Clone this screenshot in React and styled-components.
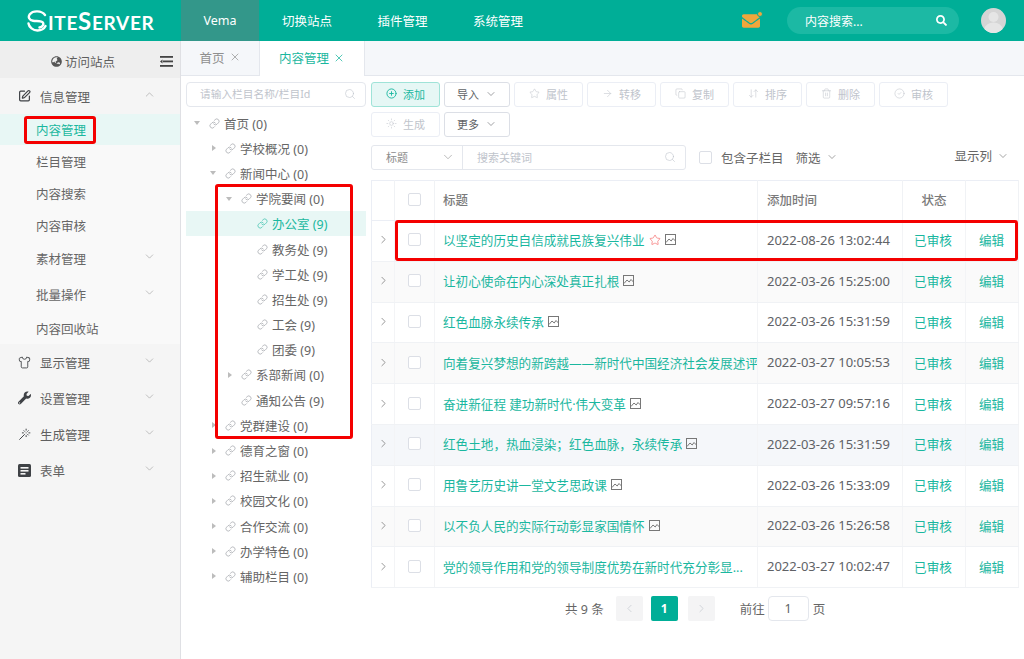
import React from 'react';
import styled, { createGlobalStyle } from 'styled-components';
import { ChevronDown, ChevronUp, ChevronRight, ChevronLeft, X, Search, Link, CirclePlus, Star, ArrowRight, Copy, ArrowDownUp, Trash2, CircleCheck, Sun, Shirt, SquarePen, Wand } from 'lucide-react';
import { FaWrench, FaEnvelope, FaSearch, FaGlobeAsia } from 'react-icons/fa';

const Global = createGlobalStyle`
  html, body { margin: 0; padding: 0; background: #fff; }
  body { font-family: "Noto Sans", "Noto Sans CJK SC", sans-serif; }
  * { box-sizing: border-box; }
`;
const GREEN = '#00ae97';
const Page = styled.div`position: relative; width: 1024px; height: 659px; overflow: hidden; display: flex; flex-direction: column; color: #666; font-size: 12.5px;`;
const Header = styled.header`height: 41px; flex: none; background: ${GREEN}; display: flex; align-items: center; color: #fff;`;
const LogoBox = styled.div`width: 181px; flex: none; padding-left: 27px; display: flex; align-items: center; height: 100%;`;
const LogoText = styled.span`font-family: "Lato", sans-serif; font-weight: 700; font-size: 19px; letter-spacing: 0.7px; margin-left: 1px; white-space: nowrap;`;
const LogoBig = styled.span`font-size: 24px;`;
const NavItem = styled.div`height: 100%; width: ${p => p.$w}px; flex: none; display: flex; align-items: center; justify-content: center; background: ${p => p.$active ? '#33978a' : 'transparent'}; font-size: 12.5px;`;
const HeaderRight = styled.div`margin-left: auto; display: flex; align-items: center; height: 100%; padding-right: 18px;`;
const Mail = styled.div`position: relative; width: 18px; height: 15px; color: #f0a63c; font-size: 18px; line-height: 0; margin-right: 27px; display:flex; align-items:center;`;
const MailDot = styled.i`position: absolute; right: -3px; top: -2px; width: 6px; height: 6px; border-radius: 50%; background: #f0a63c; border: 0.5px solid #00ae97;`;
const TopSearch = styled.div`width: 172px; height: 27px; border-radius: 14px; background: #1cb9a4; display: flex; align-items: center; justify-content: space-between; padding: 0 12px 0 18px; font-size: 12px; margin-right: 22px;`;
const Avatar = styled.div`width: 25px; height: 25px; border-radius: 50%; overflow: hidden; background: #eee; line-height: 0;`;

const Body = styled.div`flex: 1; display: flex; min-height: 0;`;
const Sidebar = styled.aside`width: 181px; flex: none; background: #f5f5f5; border-right: 1px solid #dfe0e4; display: flex; flex-direction: column;`;
const VisitBar = styled.div`height: 37px; flex: none; background: #eeeeee; position: relative; display: flex; align-items: center; justify-content: center; gap: 3px; padding-right: 14px; padding-top: 3px; font-size: 12.5px; color: #5e5e5e;`;
const FoldIcon = styled.svg`position: absolute; right: 7px; top: 15px;`;
const GroupRow = styled.div`height: ${p => p.$h || 36}px; display: flex; align-items: center; padding: 0 24px 0 18px; color: #606060; gap: 9px; flex: none;`;
const GroupIcon = styled.span`width: 13px; height: 14px; display: flex; align-items: center; justify-content: center; color: #3f4246;`;
const GroupLabel = styled.span`flex: 1;`;
const Chevron = styled.span`color: #999; line-height: 0; margin-top: -4px;`;
const SubMenu = styled.div`background: #f9f9f9; display: flex; flex-direction: column; flex: none;`;
const SubItem = styled.div`height: ${p => p.$h}px; flex: none; display: flex; align-items: center; padding: 0 24px 0 36px; color: ${p => p.$active ? '#1ab79f' : '#666'}; background: ${p => p.$active ? '#e8f7f5' : 'transparent'}; justify-content: space-between;`;

const Main = styled.main`flex: 1; display: flex; flex-direction: column; min-width: 0;`;
const Tabs = styled.div`height: 35px; flex: none; background: #f5f7fa; border-bottom: 1px solid #e4e7ed; display: flex; align-items: stretch;`;
const Tab = styled.div`width: ${p => p.$w}px; flex: none; display: flex; align-items: center; justify-content: center; gap: 4px; color: ${p => p.$active ? '#1ab79f' : '#8f8f8f'}; background: ${p => p.$active ? '#fff' : 'transparent'}; margin-bottom: ${p => p.$active ? '-1px' : 0}; border-right: 1px solid #e4e7ed; padding-bottom: 2px;`;
const Content = styled.div`flex: 1; display: flex; min-height: 0; padding: 6px 6px 0 5px; gap: 5px;`;
const TreePanel = styled.div`width: 180px; flex: none; display: flex; flex-direction: column;`;
const InputBox = styled.div`height: 24.5px; border: 1px solid #e4e7ed; border-radius: 4px; display: flex; align-items: center; justify-content: space-between; padding: 0 9px 1px 13px; color: #c0c4cc; font-size: 10.7px; background: #fff; flex: none;`;
const Tree = styled.div`margin-top: 4px; display: flex; flex-direction: column;`;
const TreeRow = styled.div`height: 25.2px; flex: none; display: flex; align-items: center; padding-left: ${p => p.$level * 16 + 8}px; color: ${p => p.$active ? '#1ab79f' : '#666'}; background: ${p => p.$active ? '#e8f7f5' : 'transparent'}; white-space: nowrap;`;
const CaretSlot = styled.span`width: 15px; flex: none; display: flex; align-items: center; padding-left: ${p => p.$open ? 0 : 2}px;`;
const Caret = styled.span`width: 0; height: 0; visibility: ${p => p.$hidden ? 'hidden' : 'visible'}; border-style: solid; border-color: transparent; ${p => p.$open ? 'border-width: 4px 3.5px 0 3.5px; border-top-color: #bcbcbc;' : 'border-width: 3.5px 0 3.5px 4px; border-left-color: #bcbcbc;'}`;
const LinkIcon = styled.span`width: 11px; line-height: 0; margin-right: 4px; color: ${p => p.$active ? '#1ab79f' : '#909399'};`;

const Right = styled.div`flex: 1; min-width: 0; display: flex; flex-direction: column;`;
const Toolbar = styled.div`display: flex; flex-wrap: wrap; gap: 5px 4px; width: 600px;`;
const Btn = styled.div`width: ${p => p.$w || 69}px; height: 25px; border-radius: 3px; padding-bottom: 2px; border: 1px solid ${p => p.$primary ? '#9fe3d8' : p.$off ? '#ebeef5' : '#dcdfe6'}; background: ${p => p.$primary ? '#e6f7f5' : '#fff'}; color: ${p => p.$primary ? '#1ab79f' : p.$off ? '#c0c4cc' : '#606266'}; font-size: 11px; display: flex; align-items: center; justify-content: center; gap: 6px;`;
const FilterRow = styled.div`margin-top: 8px; height: 25px; flex: none; display: flex; align-items: center; white-space: nowrap;`;
const Combo = styled.div`width: 315px; flex: none; height: 25px; border: 1px solid #e4e7ed; border-radius: 3px; display: flex; align-items: stretch; font-size: 11px;`;
const ComboSelect = styled.div`width: 91px; flex: none; border-right: 1px solid #e4e7ed; display: flex; align-items: center; justify-content: space-between; padding: 0 7px 2px 14px; color: #8c8c8c;`;
const ComboInput = styled.div`flex: 1; display: flex; align-items: center; justify-content: space-between; padding: 0 9px 2px 14px; color: #c0c4cc;`;
const Check = styled.span`display: block; width: 13px; height: 13px; border: 1px solid #dcdfe6; border-radius: 2px; background: #fff; flex: none;`;
const FilterLabel = styled.span`color: #666; margin-left: ${p => p.$ml}px; margin-top: ${p => p.$mt || 0}px; display: flex; align-items: center; gap: 5px; flex: none;`;
const Table = styled.table`margin-top: 10px; width: 647px; table-layout: fixed; border-collapse: collapse; border: 1px solid #ebeef5; font-size: 12.6px;`;
const Th = styled.th`height: 40px; padding: 0 0 2px ${p => p.$pl || 0}px; border-right: 1px solid #f0f2f5; border-bottom: 1px solid #ebeef5; color: #7a7a7a; font-weight: 500; font-size: 12.5px; text-align: ${p => p.$align || 'left'};`;
const Tr = styled.tr`background: ${p => p.$bg};`;
const Td = styled.td`height: 40.8px; padding: 0 ${p => p.$pr || 0}px 2px ${p => p.$pl || 0}px; border-right: 1px solid #f3f4f6; border-bottom: 1px solid #f0f2f5; text-align: ${p => p.$align || 'left'}; color: ${p => p.$green ? '#1ab79f' : '#606266'}; white-space: nowrap; overflow: hidden;`;
const TimeText = styled.span`font-size: 13px;`;
const CellCenter = styled.div`display: flex; justify-content: center; align-items: center; color: #777;`;
const TitleCell = styled.div`display: flex; align-items: center; gap: 4px; color: #1ab79f; width: 314px;`;
const TitleText = styled.span`overflow: hidden; white-space: nowrap;`;
const PicIcon = styled.svg`flex: none;`;
const Pager = styled.div`margin-top: 8px; display: flex; align-items: center; padding-left: 194px; font-size: 12.5px; color: #666;`;
const PageBtn = styled.div`width: 27px; height: 25px; flex: none; border-radius: 2px; background: ${p => p.$active ? '#00ae97' : '#f4f4f5'}; color: ${p => p.$active ? '#fff' : '#c0c4cc'}; font-weight: 700; margin-left: ${p => p.$ml}px; display: flex; align-items: center; justify-content: center; font-size: 12px;`;
const PageGoto = styled.span`margin-left: 25px;`;
const PageInput = styled.div`width: 41px; height: 25px; border: 1px solid #e4e7ed; border-radius: 4px; display: flex; align-items: center; justify-content: center; margin: 0 4px 0 3px; color: #606266;`;
const Mark = styled.div`position: absolute; left: ${p => p.$x}px; top: ${p => p.$y}px; width: ${p => p.$w}px; height: ${p => p.$h}px; border: 3px solid #f40000; border-radius: 3px; pointer-events: none;`;

const tree = [
  [0, 'o', '首页 (0)'], [1, 'c', '学校概况 (0)'], [1, 'o', '新闻中心 (0)'], [2, 'o', '学院要闻 (0)'],
  [3, 'n', '办公室 (9)', true], [3, 'n', '教务处 (9)'], [3, 'n', '学工处 (9)'], [3, 'n', '招生处 (9)'], [3, 'n', '工会 (9)'], [3, 'n', '团委 (9)'],
  [2, 'c', '系部新闻 (0)'], [2, 'n', '通知公告 (9)'], [1, 'c', '党群建设 (0)'], [1, 'c', '德育之窗 (0)'], [1, 'c', '招生就业 (0)'], [1, 'c', '校园文化 (0)'], [1, 'c', '合作交流 (0)'], [1, 'c', '办学特色 (0)'], [1, 'c', '辅助栏目 (0)'],
];
const rows = [
  ['以坚定的历史自信成就民族复兴伟业', '2022-08-26 13:02:44', true, '#fff'],
  ['让初心使命在内心深处真正扎根', '2022-03-26 15:25:00', false, '#fafafa'],
  ['红色血脉永续传承', '2022-03-26 15:31:59', false, '#fff'],
  ['向着复兴梦想的新跨越——新时代中国经济社会发展述评', '2022-03-27 10:05:53', false, '#fafafa', true],
  ['奋进新征程 建功新时代·伟大变革', '2022-03-27 09:57:16', false, '#fff'],
  ['红色土地，热血浸染；红色血脉，永续传承', '2022-03-26 15:31:59', false, '#f5f7fa'],
  ['用鲁艺历史讲一堂文艺思政课', '2022-03-26 15:33:09', false, '#fff'],
  ['以不负人民的实际行动彰显家国情怀', '2022-03-26 15:26:58', false, '#fafafa'],
  ['党的领导作用和党的领导制度优势在新时代充分彰显...', '2022-03-27 10:02:47', false, '#fff', true],
];
const Pic = () => (
  <PicIcon width="11" height="11" viewBox="0 0 11 11" fill="none" stroke="#777" strokeWidth="1">
    <rect x=".5" y=".5" width="10" height="10" />
    <path d="M1 8.500 4 5l2.200 2L8 4.500 10.500 7" />
  </PicIcon>
);
const FormIcon = () => (
  <svg width="13" height="13" viewBox="0 0 13 13"><rect width="13" height="13" rx="1.500" fill="#3f4246" /><rect x="2.500" y="3" width="8" height="1.600" fill="#f5f5f5" /><rect x="2.500" y="6" width="8" height="1.600" fill="#f5f5f5" /><rect x="2.500" y="9" width="5" height="1.600" fill="#f5f5f5" /></svg>
);
const Down = () => <Chevron><ChevronDown size={13} strokeWidth={1.1} /></Chevron>;

export default function App() {
  return (
    <Page>
      <Global />
      <Header>
        <LogoBox>
          <svg width="20" height="22" viewBox="0 0 20 22" fill="none" stroke="#fff" strokeWidth="2.400" strokeLinecap="round">
            <path d="M18 5C14.500 .5 6 .2 2.800 4.300 .8 7 2 10 6 10.700c3.500.6 7.500-.2 9.500 1.500 1.800 1.700.5 4.800-3 5.300" />
            <path d="M1.500 13.500C2 17 6 20.500 10.500 20.500c3.500 0 6.500-1.500 8-4.500" />
          </svg>
          <LogoText>ITE<LogoBig>S</LogoBig>ERVER</LogoText>
        </LogoBox>
        <NavItem $w={78} $active>Vema</NavItem>
        <NavItem $w={96}>切换站点</NavItem>
        <NavItem $w={95}>插件管理</NavItem>
        <NavItem $w={96}>系统管理</NavItem>
        <HeaderRight>
          <Mail><FaEnvelope /><MailDot /></Mail>
          <TopSearch>内容搜索...<FaSearch size={11} /></TopSearch>
          <Avatar>
            <svg width="25" height="25" viewBox="0 0 25 25"><circle cx="12.500" cy="9" r="5" fill="#fff" /><ellipse cx="12.500" cy="21" rx="9" ry="6.500" fill="#fff" /><rect width="25" height="25" fill="#000" opacity="0.1" /></svg>
          </Avatar>
        </HeaderRight>
      </Header>
      <Body>
        <Sidebar>
          <VisitBar>
            <FaGlobeAsia size={11} color="#555" />访问站点
            <FoldIcon width="13" height="11" viewBox="0 0 13 11" fill="#444"><rect width="13" height="1.800" /><rect x="3" y="4.500" width="10" height="1.800" /><rect y="9" width="13" height="1.800" /><path d="M2.500 3.500v4L0 5.500z" /></FoldIcon>
          </VisitBar>
          <GroupRow><GroupIcon><SquarePen size={14} strokeWidth={2.2} /></GroupIcon><GroupLabel>信息管理</GroupLabel><Chevron><ChevronUp size={13} strokeWidth={1.1} /></Chevron></GroupRow>
          <SubMenu>
            <SubItem $h={31} $active>内容管理</SubItem>
            <SubItem $h={32}>栏目管理</SubItem>
            <SubItem $h={32}>内容搜索</SubItem>
            <SubItem $h={32}>内容审核</SubItem>
            <SubItem $h={34}>素材管理<Down /></SubItem>
            <SubItem $h={38}>批量操作<Down /></SubItem>
            <SubItem $h={31}>内容回收站</SubItem>
          </SubMenu>
          <GroupRow><GroupIcon><Shirt size={15} strokeWidth={1.6} /></GroupIcon><GroupLabel>显示管理</GroupLabel><Down /></GroupRow>
          <GroupRow><GroupIcon><FaWrench size={14} /></GroupIcon><GroupLabel>设置管理</GroupLabel><Down /></GroupRow>
          <GroupRow><GroupIcon><Wand size={15} strokeWidth={1.8} /></GroupIcon><GroupLabel>生成管理</GroupLabel><Down /></GroupRow>
          <GroupRow><GroupIcon><FormIcon /></GroupIcon><GroupLabel>表单</GroupLabel><Down /></GroupRow>
        </Sidebar>
        <Main>
          <Tabs>
            <Tab $w={79}>首页 <X size={12} strokeWidth={1.4} /></Tab>
            <Tab $w={105} $active>内容管理 <X size={12} strokeWidth={1.5} /></Tab>
          </Tabs>
          <Content>
            <TreePanel>
              <InputBox>请输入栏目名称/栏目Id<Search size={12} strokeWidth={1.2} /></InputBox>
              <Tree>
                {tree.map(([level, kind, label, active]) => (
                  <TreeRow key={label} $level={level} $active={active}>
                    <CaretSlot $open={kind === 'o'}><Caret $open={kind === 'o'} $hidden={kind === 'n'} /></CaretSlot>
                    <LinkIcon $active={active}><Link size={11} strokeWidth={1.3} /></LinkIcon>
                    {label}
                  </TreeRow>
                ))}
              </Tree>
            </TreePanel>
            <Right>
              <Toolbar>
                <Btn $primary><CirclePlus size={11} />添加</Btn>
                <Btn $w={66}>导入<ChevronDown size={12} strokeWidth={1.2} /></Btn>
                <Btn $off><Star size={11} strokeWidth={1.2} />属性</Btn>
                <Btn $off><ArrowRight size={11} strokeWidth={1.2} />转移</Btn>
                <Btn $off><Copy size={11} strokeWidth={1.2} />复制</Btn>
                <Btn $off><ArrowDownUp size={11} strokeWidth={1.2} />排序</Btn>
                <Btn $off><Trash2 size={11} strokeWidth={1.2} />删除</Btn>
                <Btn $off><CircleCheck size={11} strokeWidth={1.2} />审核</Btn>
                <Btn $off><Sun size={11} strokeWidth={1.2} />生成</Btn>
                <Btn $w={66}>更多<ChevronDown size={12} strokeWidth={1.2} /></Btn>
              </Toolbar>
              <FilterRow>
                <Combo>
                  <ComboSelect>标题<ChevronDown size={14} strokeWidth={1} /></ComboSelect>
                  <ComboInput>搜索关键词<Search size={12} strokeWidth={1.2} /></ComboInput>
                </Combo>
                <FilterLabel $ml={13}><Check /></FilterLabel>
                <FilterLabel $ml={9} $mt={-1}>包含子栏目</FilterLabel>
                <FilterLabel $ml={12} $mt={-1}>筛选<ChevronDown size={12} strokeWidth={1.2} /></FilterLabel>
                <FilterLabel $ml={117} $mt={-4}>显示列<ChevronDown size={12} strokeWidth={1.2} /></FilterLabel>
              </FilterRow>
              <Table>
                <colgroup>
                  <col width="23" /><col width="40" /><col width="323" /><col width="145" /><col width="63" /><col width="53" />
                </colgroup>
                <thead>
                  <tr>
                    <Th /><Th><CellCenter><Check /></CellCenter></Th>
                    <Th $pl={8}>标题</Th><Th $pl={9}>添加时间</Th><Th $align="center">状态</Th><Th />
                  </tr>
                </thead>
                <tbody>
                  {rows.map(([title, time, star, bg, noPic]) => (
                    <Tr key={title} $bg={bg}>
                      <Td><CellCenter><ChevronRight size={13} strokeWidth={1.4} /></CellCenter></Td>
                      <Td><CellCenter><Check /></CellCenter></Td>
                      <Td $pl={8}>
                        <TitleCell>
                          <TitleText>{title}</TitleText>
                          {star && <Star size={12} color="#f56c6c" strokeWidth={1.4} />}
                          {!noPic && <Pic />}
                        </TitleCell>
                      </Td>
                      <Td $pl={9}><TimeText>{time}</TimeText></Td>
                      <Td $align="center" $green $pr={2}>已审核</Td>
                      <Td $align="center" $green $pr={1}>编辑</Td>
                    </Tr>
                  ))}
                </tbody>
              </Table>
              <Pager>
                共 9 条
                <PageBtn $ml={12}><ChevronLeft size={13} strokeWidth={1.2} /></PageBtn>
                <PageBtn $ml={8} $active>1</PageBtn>
                <PageBtn $ml={10}><ChevronRight size={13} strokeWidth={1.2} /></PageBtn>
                <PageGoto>前往</PageGoto>
                <PageInput>1</PageInput>
                页
              </Pager>
            </Right>
          </Content>
        </Main>
      </Body>
      <Mark $x={24} $y={116} $w={72} $h={28} />
      <Mark $x={215} $y={184} $w={138} $h={255} />
      <Mark $x={395} $y={220} $w={623} $h={41} />
    </Page>
  );
}
